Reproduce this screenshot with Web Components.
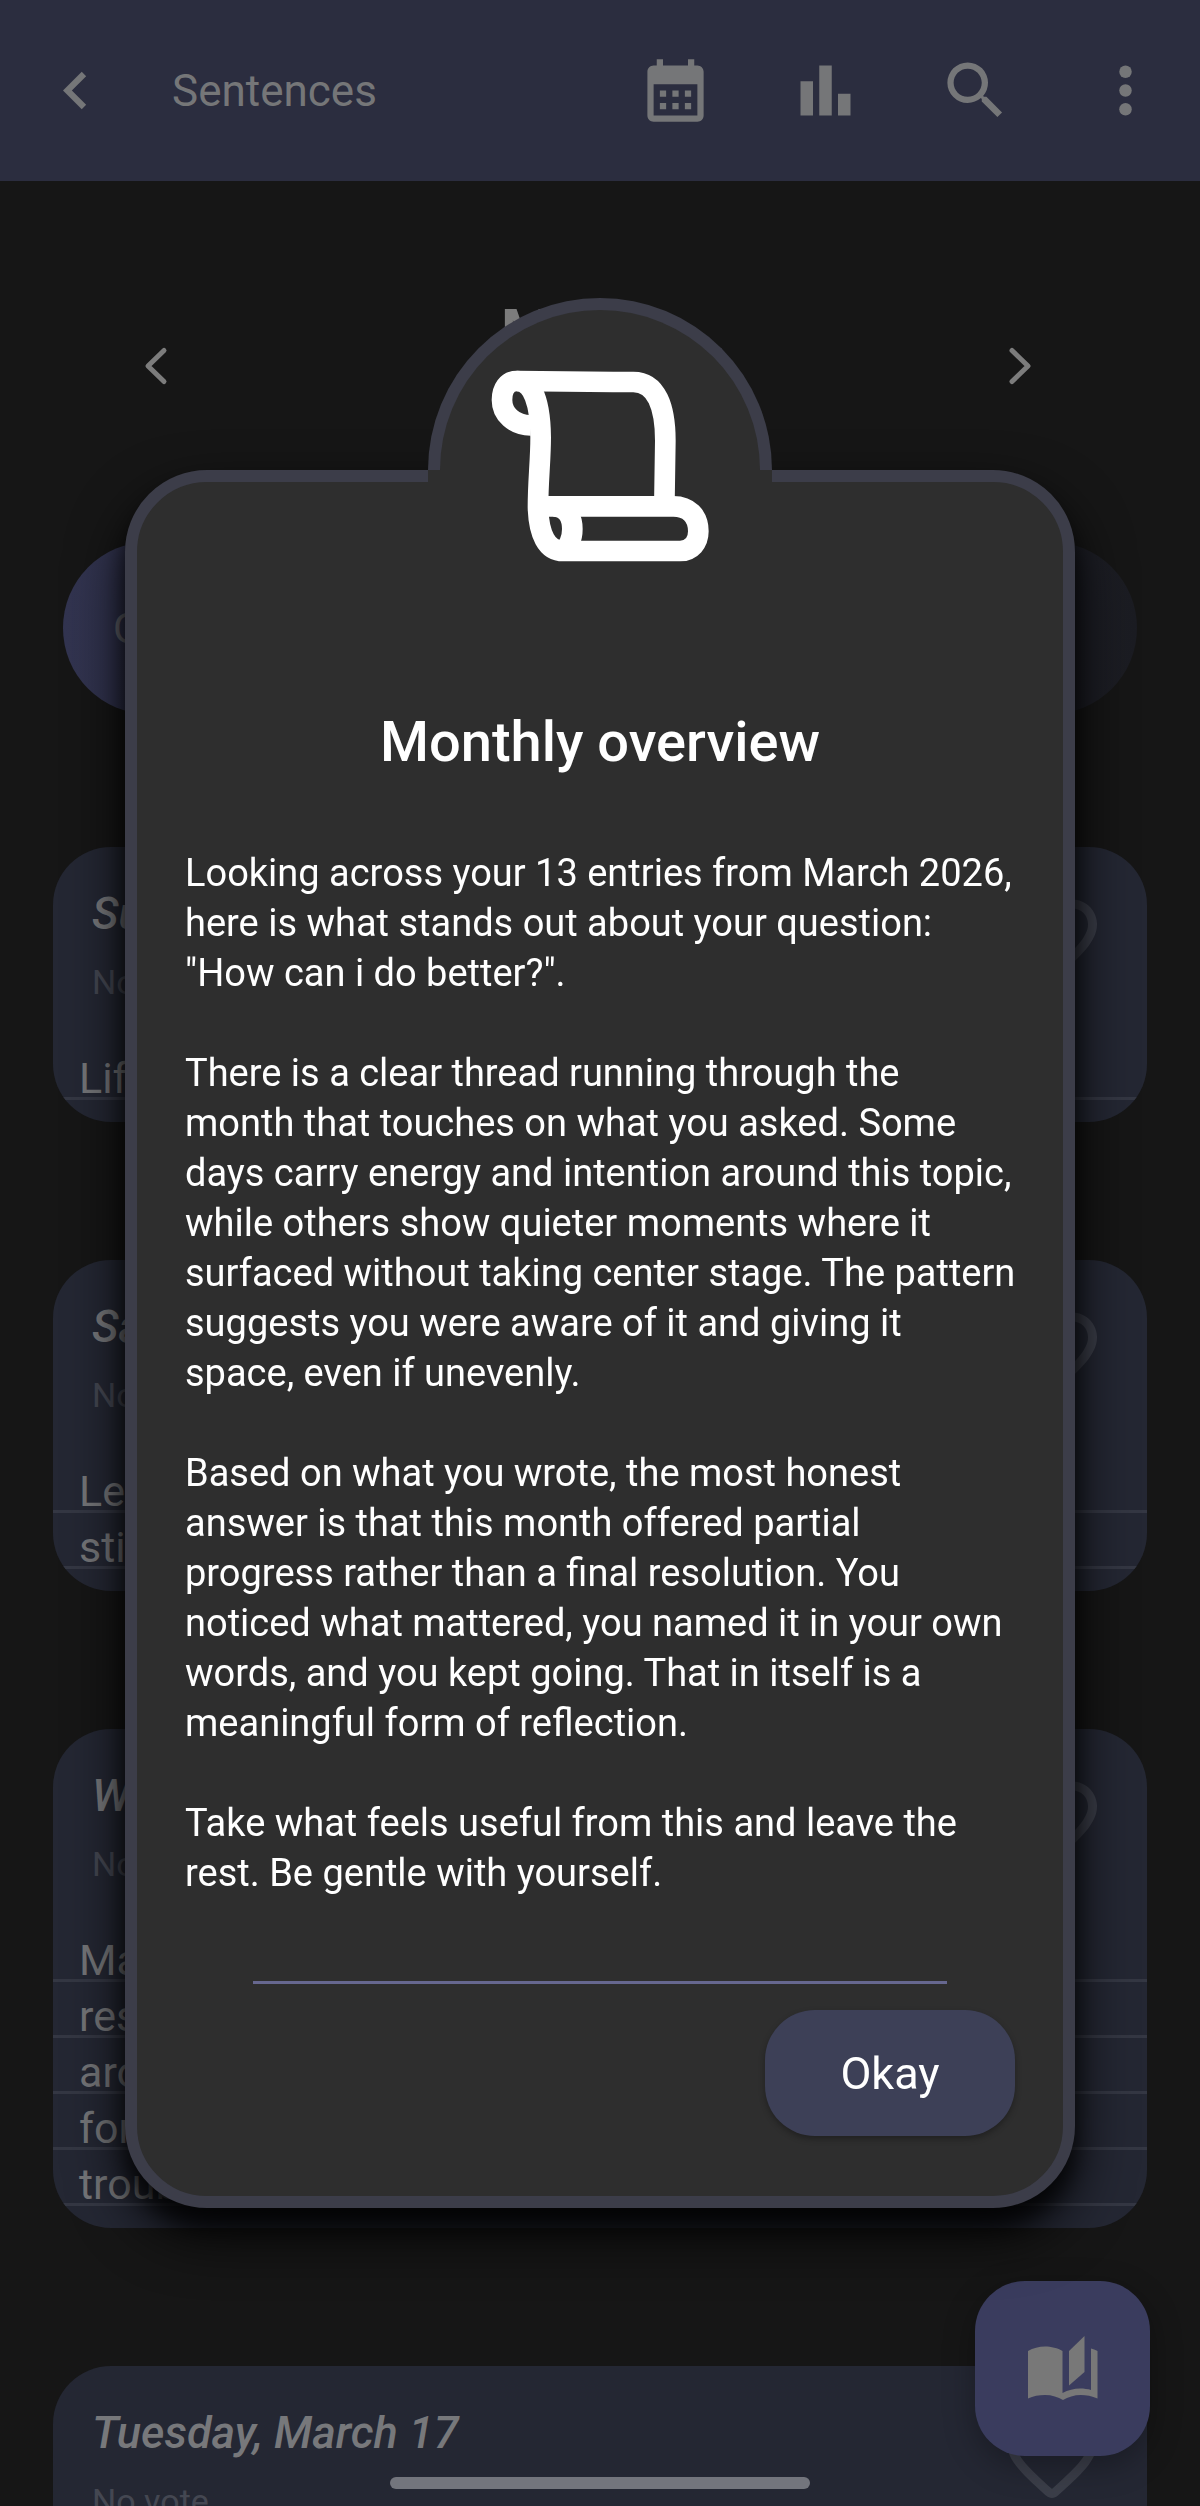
<!DOCTYPE html>
<html lang="en">
<head>
<meta charset="utf-8">
<meta name="viewport" content="width=device-width, initial-scale=1">
<title>Sentences</title>
<style>
  body {
    background-color: #161616;
    color: #747578;
    font-family: Roboto, "Liberation Sans", sans-serif;
    font-size: 42px;
    margin: 0;
  }

  .entries {
    display: flex;
    flex-direction: column;
    gap: 138px;
    margin-top: 133px;
  }
</style>
</head>
<body>

<journal-app>
  <app-bar slot="bar" heading="Sentences"></app-bar>
  <month-picker month="March" year="2026"></month-picker>
  <ask-bar>Overview</ask-bar>
  <div class="entries">
    <entry-card day="Sunday, March 22">Life is good</entry-card>
    <entry-card day="Saturday, March 21">Learning to be<br>still</entry-card>
    <entry-card day="Wednesday, March 18">Made time to<br>rest<br>around noon<br>for once, no<br>trouble at all</entry-card>
    <entry-card day="Tuesday, March 17">&nbsp;</entry-card>
  </div>
</journal-app>

<overview-dialog heading="Monthly overview" action="Okay">
  <p>Looking across your 13 entries from March 2026,
here is what stands out about your question:
"How can i do better?".</p>
  <p>There is a clear thread running through the
month that touches on what you asked. Some
days carry energy and intention around this topic,
while others show quieter moments where it
surfaced without taking center stage. The pattern
suggests you were aware of it and giving it
space, even if unevenly.</p>
  <p>Based on what you wrote, the most honest
answer is that this month offered partial
progress rather than a final resolution. You
noticed what mattered, you named it in your own
words, and you kept going. That in itself is a
meaningful form of reflection.</p>
  <p>Take what feels useful from this and leave the
rest. Be gentle with yourself.</p>
</overview-dialog>

<script>
// journal-app

class JournalApp extends HTMLElement {
  constructor() {
    super();
    let shadow = this.attachShadow({mode: 'open'});
    shadow.innerHTML = `
    <style>
    :host {
      display: flex;
      flex-direction: column;
      height: 100vh;
      overflow: hidden;
      position: relative;
    }

    main {
      display: flex;
      flex-direction: column;
      padding: 0 53px;
    }

    .fab {
      align-items: center;
      background-color: #3a3c5e;
      border: none;
      border-radius: 50px;
      bottom: 50px;
      box-shadow: 0 10px 32px rgb(0,0,0,0.3);
      color: #787878;
      display: flex;
      height: 175px;
      justify-content: center;
      padding: 0;
      position: absolute;
      right: 50px;
      width: 175px;
    }

    .handle {
      background-color: #73757d;
      border-radius: 6px;
      bottom: 17px;
      height: 12px;
      left: 50%;
      margin-left: -210px;
      position: absolute;
      width: 420px;
    }
    </style>
    <slot name="bar"></slot>
    <main><slot></slot></main>
    <button class="fab" aria-label="Read">
      <svg width="70" height="65" viewBox="0 0 70 65" fill="currentColor">
        <path d="M0 15C5 12 11 10.500 17 10.500S30 12 34.500 15V57C40 54 46 52.500 52 52.500C56 52.500 60 53 63 54V12.500C65 13 67.500 14 69.500 15V62.500C64 60 58 59 53 59C46 59 40 61 35 64C30 61 24 59 17 59C11 59 5 60 0 62.500Z"/>
        <path d="M41 15L56.500 0V36L41 49.500Z"/>
      </svg>
    </button>
    <div class="handle"></div>
    `;
  }
}

customElements.define('journal-app', JournalApp);

// app-bar

class AppBar extends HTMLElement {
  constructor() {
    super();
    let shadow = this.attachShadow({mode: 'open'});
    shadow.innerHTML = `
    <style>
    :host {
      background-color: #2b2d3f;
      color: #757678;
      display: block;
    }

    header {
      align-items: center;
      display: flex;
      height: 181px;
    }

    h1 {
      flex: 1;
      font-size: 44px;
      font-weight: 400;
      margin: 0;
      padding-left: 22px;
    }

    button {
      background: none;
      border: none;
      color: inherit;
      display: flex;
      justify-content: center;
      padding: 0;
      width: 150px;
    }

    svg {
      height: 75px;
      width: 75px;
    }
    </style>
    <header>
      <button aria-label="Back"><svg viewBox="0 0 24 24" fill="currentColor"><path d="M15.41 7.41 14 6l-6 6 6 6 1.410-1.410L10.830 12z"/></svg></button>
      <h1 id="heading"></h1>
      <button aria-label="Calendar"><svg viewBox="0 0 24 24" fill="currentColor"><path d="M19 4h-1V2h-2v2H8V2H6v2H5c-1.110 0-1.990.9-1.990 2L3 20c0 1.100.89 2 2 2h14c1.100 0 2-.9 2-2V6c0-1.100-.9-2-2-2zm0 16H5V10h14v10zM9 14H7v-2h2v2zm4 0h-2v-2h2v2zm4 0h-2v-2h2v2zm-8 4H7v-2h2v2zm4 0h-2v-2h2v2zm4 0h-2v-2h2v2z"/></svg></button>
      <button aria-label="Statistics"><svg viewBox="0 0 24 24" fill="currentColor"><path d="M4 9h4v11H4zm12 4h4v7h-4zm-6-9h4v16h-4z"/></svg></button>
      <button aria-label="Search"><svg viewBox="0 0 24 24" fill="currentColor"><path d="M15.500 14h-.79l-.28-.27A6.471 6.471 0 0 0 16 9.500 6.500 6.500 0 1 0 9.500 16c1.610 0 3.090-.59 4.230-1.570l.27.28v.79l5 4.990L20.490 19l-4.990-5zm-6 0C7.010 14 5 11.990 5 9.500S7.010 5 9.500 5 14 7.010 14 9.500 11.990 14 9.500 14z"/></svg></button>
      <button aria-label="More"><svg viewBox="0 0 24 24" fill="currentColor"><circle cx="12" cy="6" r="2"/><circle cx="12" cy="12" r="2"/><circle cx="12" cy="18" r="2"/></svg></button>
    </header>
    `;
    shadow.getElementById('heading').textContent = this.getAttribute('heading');
  }
}

customElements.define('app-bar', AppBar);

// month-picker

class MonthPicker extends HTMLElement {
  constructor() {
    super();
    let shadow = this.attachShadow({mode: 'open'});
    shadow.innerHTML = `
    <style>
    :host {
      align-items: center;
      color: #7c7c7c;
      display: flex;
      justify-content: space-between;
      margin-top: 110px;
      padding: 0 104px 0 80px;
    }

    button {
      background: none;
      border: none;
      color: inherit;
      display: flex;
      padding: 0 10px;
    }

    .label {
      line-height: 68px;
      text-align: center;
    }

    .month {
      font-size: 61px;
      font-weight: 700;
      line-height: 82px;
    }

    svg {
      fill: none;
      stroke: currentColor;
      stroke-linecap: round;
      stroke-linejoin: round;
      stroke-width: 5;
    }
    </style>
    <button aria-label="Previous month"><svg width="26" height="40" viewBox="0 0 26 40"><path d="M21 4.500L5 20L21 35.500"/></svg></button>
    <div class="label">
      <div id="month" class="month"></div>
      <div id="year"></div>
    </div>
    <button aria-label="Next month"><svg width="26" height="40" viewBox="0 0 26 40"><path d="M5 4.500L21 20L5 35.500"/></svg></button>
    `;
    shadow.getElementById('month').textContent = this.getAttribute('month');
    shadow.getElementById('year').textContent = this.getAttribute('year');
  }
}

customElements.define('month-picker', MonthPicker);

// ask-bar

class AskBar extends HTMLElement {
  constructor() {
    super();
    let shadow = this.attachShadow({mode: 'open'});
    shadow.innerHTML = `
    <style>
    :host {
      display: block;
      margin: 101px 10px 0;
    }

    button {
      background: linear-gradient(90deg, #323450, #1b1c22);
      border: none;
      border-radius: 86px;
      color: #66676f;
      display: block;
      font: inherit;
      font-size: 42px;
      height: 172px;
      padding: 0 50px;
      text-align: left;
      width: 100%;
    }
    </style>
    <button><slot></slot></button>
    `;
  }
}

customElements.define('ask-bar', AskBar);

// entry-card

class EntryCard extends HTMLElement {
  constructor() {
    super();
    let shadow = this.attachShadow({mode: 'open'});
    shadow.innerHTML = `
    <style>
    :host {
      background-color: #242733;
      border-radius: 58px;
      display: block;
      flex: none;
      overflow: hidden;
      padding-bottom: 22px;
    }

    header {
      align-items: flex-start;
      display: flex;
      height: 197px;
      justify-content: space-between;
    }

    .about {
      padding: 42px 0 0 39px;
    }

    h2 {
      color: #77787b;
      font-size: 45px;
      font-style: italic;
      font-weight: 500;
      line-height: 50px;
      margin: 0;
    }

    .vote {
      color: #444752;
      font-size: 34px;
      line-height: 50px;
      margin: 18px 0 0;
    }

    .like {
      background: none;
      border: none;
      color: #3b3e49;
      display: flex;
      margin: 39px 41px 0 0;
      padding: 0;
    }

    .text {
      background-image: linear-gradient(transparent 53px, #343743 53px);
      background-size: 100% 56px;
      font-size: 43px;
      line-height: 56px;
      padding-left: 26px;
    }

    .text span {
      display: block;
      position: relative;
      top: 6px;
    }
    </style>
    <header>
      <div class="about">
        <h2 id="day"></h2>
        <p class="vote">No vote</p>
      </div>
      <button class="like" aria-label="Like">
        <svg width="108" height="108" viewBox="0 0 24 24" fill="currentColor"><path d="M19.660 3.990c-2.640-1.800-5.900-.96-7.660 1.100-1.760-2.060-5.020-2.910-7.660-1.100-1.400.96-2.280 2.580-2.340 4.290-.14 3.880 3.300 6.990 8.550 11.760l.1.090c.76.69 1.930.69 2.690-.01l.11-.1c5.250-4.760 8.680-7.870 8.550-11.750-.06-1.700-.94-3.320-2.340-4.280zM12.100 18.550l-.1.100-.1-.1C7.140 14.240 4 11.390 4 8.500 4 6.500 5.500 5 7.500 5c1.540 0 3.040.99 3.570 2.360h1.870C13.460 5.990 14.960 5 16.500 5c2 0 3.500 1.500 3.500 3.500 0 2.890-3.140 5.740-7.900 10.050z"/></svg>
      </button>
    </header>
    <div class="text"><span><slot></slot></span></div>
    `;
    shadow.getElementById('day').textContent = this.getAttribute('day');
  }
}

customElements.define('entry-card', EntryCard);

// overview-dialog

class OverviewDialog extends HTMLElement {
  constructor() {
    super();
    let shadow = this.attachShadow({mode: 'open'});
    shadow.innerHTML = `
    <style>
    :host {
      --fill: #2e2e2e;
      --edge: #3c3d49;
      align-items: center;
      box-sizing: border-box;
      color: white;
      display: flex;
      inset: 0;
      padding: 172px 125px 0;
      position: fixed;
    }

    .dialog {
      background-color: var(--fill);
      border: 12px solid var(--edge);
      border-radius: 82px;
      box-shadow: 0 26px 56px rgb(0,0,0,0.9), 0 18px 20px rgb(0,0,0,0.6);
      flex: 1;
      min-width: 0;
      padding: 0 40px 60px;
      position: relative;
    }

    /* half circle that stands on the top edge */
    .dome {
      background-color: var(--fill);
      border: 12px solid var(--edge);
      border-bottom: none;
      border-radius: 172px 172px 0 0;
      box-sizing: border-box;
      height: 172px;
      left: 50%;
      margin-left: -172px;
      position: absolute;
      top: -184px;
      width: 344px;
    }

    .dome::after {
      background-color: var(--fill);
      content: '';
      height: 12px;
      left: -12px;
      position: absolute;
      right: -12px;
      top: 100%;
    }

    .dome svg {
      left: 51px;
      position: absolute;
      top: 60px;
      z-index: 1;
    }

    h2 {
      font-size: 56px;
      font-weight: 500;
      line-height: 66px;
      margin: 0;
      padding-top: 227px;
      text-align: center;
    }

    .message {
      display: flex;
      flex-direction: column;
      font-size: 38px;
      gap: 50px;
      line-height: 50px;
      padding: 73px 0 83px 8px;
    }

    ::slotted(p) {
      margin: 0;
      white-space: pre-line;
    }

    hr {
      background-color: #66678f;
      border: none;
      height: 3px;
      margin: 0 76px 26px;
    }

    .actions {
      display: flex;
      justify-content: flex-end;
      padding-right: 8px;
    }

    .actions button {
      background-color: #3d4057;
      border: none;
      border-radius: 50px;
      box-shadow: 0 3px 6px rgb(0,0,0,0.3);
      color: inherit;
      font: inherit;
      font-size: 45px;
      height: 126px;
      width: 250px;
    }
    </style>
    <section class="dialog" role="dialog" aria-labelledby="heading">
      <div class="dome">
        <svg width="220" height="194" viewBox="273 268 660 582" fill="none" stroke="white" stroke-width="62" stroke-linejoin="round">
          <path d="M392 434C342 434 306 400 306 358C306 325 322 301 350 301L640 304H700C770 304 796 380 796 480L793 677"/>
          <path d="M350 301C400 301 421 370 422 470C422 540 414 600 414 680C416 760 440 811 490 811H840C875 811 895 785 895 752C895 705 865 677 820 677H414"/>
          <path d="M460 677C500 677 517 710 517 745C517 775 505 800 490 811"/>
        </svg>
      </div>
      <h2 id="heading"></h2>
      <div class="message"><slot></slot></div>
      <hr>
      <div class="actions"><button id="action"></button></div>
    </section>
    `;
    shadow.getElementById('heading').textContent = this.getAttribute('heading');
    shadow.getElementById('action').textContent = this.getAttribute('action');
  }
}

customElements.define('overview-dialog', OverviewDialog);
</script>
</body>
</html>
